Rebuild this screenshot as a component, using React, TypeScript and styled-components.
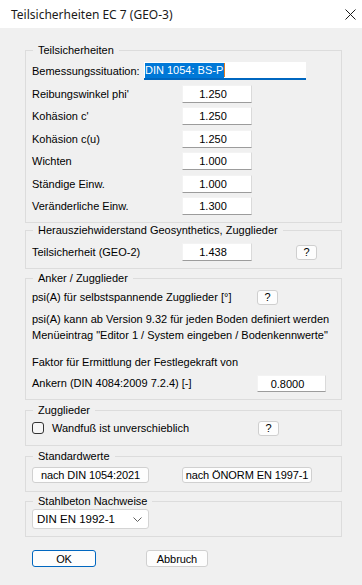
import React from 'react';
import styled, { createGlobalStyle } from 'styled-components';

const GlobalStyle = createGlobalStyle`
  html, body {
    margin: 0;
    padding: 0;
    background: #f0f0f0;
  }
  body {
    font-family: "Liberation Sans", Arial, sans-serif;
    font-size: 11px;
    color: #000;
  }
`;

// WINDOW FRAME
const Window = styled.div`
  width: 362px;
  height: 585px;
  background: #f0f0f0;
  overflow: hidden;
  display: flex;
  flex-direction: column;
`;

const TitleBar = styled.div`
  height: 28px;
  flex: none;
  background: #ffffff;
  display: flex;
  align-items: center;
  justify-content: space-between;
  padding: 0 6px 0 11px;
  box-sizing: border-box;
  font-family: "Noto Sans", "Open Sans", sans-serif;
  font-size: 12px;
  color: #1a1a1a;
`;

const Body = styled.div`
  display: flex;
  flex-direction: column;
  padding: 15px 20px 0 25px;
`;

// GROUP BOXES
const Group = styled.fieldset<{ $gap?: number; $pt: number; $pb: number }>`
  margin: ${({ $gap }) => $gap ?? 0}px 0 0 0;
  padding: ${({ $pt }) => $pt}px 0 ${({ $pb }) => $pb}px 6px;
  border: 1px solid #dcdcdc;
  min-width: 0;
  width: 317px;
  box-sizing: border-box;
`;

const Legend = styled.legend`
  margin-left: 1px;
  padding: 0 5px;
  height: 14px;
  line-height: 14px;
  font-size: 11px;
`;

const Stack = styled.div<{ $gap?: number }>`
  display: flex;
  flex-direction: column;
  gap: ${({ $gap }) => $gap ?? 0}px;
`;

const Row = styled.div<{ $h?: number; $mt?: number }>`
  display: flex;
  align-items: center;
  height: ${({ $h }) => $h ?? 18}px;
  margin-top: ${({ $mt }) => $mt ?? 0}px;
  white-space: nowrap;
`;

const Label = styled.span<{ $w?: number }>`
  width: ${({ $w }) => ($w ? `${$w}px` : 'auto')};
  flex: none;
`;

const TextLine = styled.div<{ $mt?: number }>`
  height: 16px;
  line-height: 16px;
  margin-top: ${({ $mt }) => $mt ?? 0}px;
  white-space: nowrap;
`;

// CONTROLS
const Field = styled.div<{ $w?: number; $h?: number }>`
  width: ${({ $w }) => $w ?? 70}px;
  height: ${({ $h }) => $h ?? 18}px;
  line-height: ${({ $h }) => ($h ?? 18) - 1}px;
  box-sizing: border-box;
  background: #ffffff;
  border: 1px solid #f3f3f3;
  border-right-color: #dadada;
  border-bottom-color: #9c9c9c;
  text-align: center;
  padding-right: 8px;
  flex: none;
`;

const FocusField = styled.div`
  width: 162px;
  height: 18px;
  box-sizing: border-box;
  background: #ffffff;
  border-bottom: 2px solid #0067c0;
  display: flex;
  align-items: center;
  padding-left: 1px;
  flex: none;
`;

const Selected = styled.span`
  background: #0078d7;
  color: #ffffff;
  line-height: 15px;
  padding-right: 1px;
`;

const Caret = styled.span`
  width: 1px;
  height: 14px;
  background: #e07a1f;
`;

const HelpButton = styled.div<{ $ml?: number }>`
  width: 21px;
  height: 15px;
  margin-left: ${({ $ml }) => $ml ?? 0}px;
  box-sizing: border-box;
  border: 1px solid #cfcfcf;
  border-radius: 3px;
  background: #fdfdfd;
  display: flex;
  align-items: center;
  justify-content: center;
  flex: none;
`;

const PushButton = styled.div<{ $w: number; $h?: number; $ml?: number; $default?: boolean }>`
  width: ${({ $w }) => $w}px;
  height: ${({ $h }) => $h ?? 16}px;
  margin-left: ${({ $ml }) => $ml ?? 0}px;
  box-sizing: border-box;
  border: 1px solid ${({ $default }) => ($default ? '#0067c0' : '#d0d0d0')};
  border-radius: 3px;
  background: #fdfdfd;
  display: flex;
  align-items: center;
  justify-content: center;
  flex: none;
  font-size: 11px;
  letter-spacing: -0.1px;
  white-space: nowrap;
`;

const CheckBox = styled.div`
  width: 12px;
  height: 12px;
  box-sizing: border-box;
  border: 1px solid #333333;
  border-radius: 3px;
  background: #f6f6f6;
  margin: 0 8px 0 0;
  flex: none;
`;

const Combo = styled.div`
  width: 117px;
  height: 20px;
  box-sizing: border-box;
  background: #ffffff;
  border: 1px solid #d4d4d4;
  border-radius: 3px;
  display: flex;
  align-items: center;
  justify-content: space-between;
  padding: 0 6px 0 4px;
  font-size: 11.5px;
`;

const ButtonBar = styled.div`
  display: flex;
  margin-top: 13px;
  padding-left: 7px;
`;

const CloseIcon = () => (
  <svg width="11" height="11" viewBox="0 0 11 11">
    <path d="M0.5 0.5 L10.5 10.5 M10.5 0.5 L0.5 10.5" stroke="#1a1a1a" strokeWidth="1" fill="none" />
  </svg>
);

const Chevron = () => (
  <svg width="9" height="5" viewBox="0 0 9 5">
    <path d="M0.5 0.5 L4.5 4.5 L8.5 0.5" stroke="#606060" strokeWidth="1" fill="none" />
  </svg>
);

const partialFactors = [
  { label: "Reibungswinkel phi'", value: '1.250' },
  { label: "Kohäsion c'", value: '1.250' },
  { label: 'Kohäsion c(u)', value: '1.250' },
  { label: 'Wichten', value: '1.000' },
  { label: 'Ständige Einw.', value: '1.000' },
  { label: 'Veränderliche Einw.', value: '1.300' },
];

const App = () => (
  <>
    <GlobalStyle />
    <Window>
      <TitleBar>
        <span>Teilsicherheiten EC 7 (GEO-3)</span>
        <CloseIcon />
      </TitleBar>
      <Body>
        <Group $pt={5} $pb={7}>
          <Legend>Teilsicherheiten</Legend>
          <Stack $gap={4.5}>
            <Row>
              <Label $w={112}>Bemessungssituation:</Label>
              <FocusField>
                <Selected>DIN 1054: BS-P</Selected>
                <Caret />
              </FocusField>
            </Row>
            {partialFactors.map((f) => (
              <Row key={f.label}>
                <Label $w={150}>{f.label}</Label>
                <Field>{f.value}</Field>
              </Row>
            ))}
          </Stack>
        </Group>

        <Group $pt={6} $pb={7}>
          <Legend>Herausziehwiderstand Geosynthetics, Zugglieder</Legend>
          <Row>
            <Label $w={150}>Teilsicherheit (GEO-2)</Label>
            <Field>1.438</Field>
            <HelpButton $ml={44}>?</HelpButton>
          </Row>
        </Group>

        <Group $gap={2} $pt={3} $pb={7}>
          <Legend>Anker / Zugglieder</Legend>
          <Row>
            <Label $w={225}>psi(A) für selbstspannende Zugglieder [°]</Label>
            <HelpButton>?</HelpButton>
          </Row>
          <TextLine $mt={5}>psi(A) kann ab Version 9.32 für jeden Boden definiert werden</TextLine>
          <TextLine>Menüeintrag "Editor 1 / System eingeben / Bodenkennwerte"</TextLine>
          <TextLine $mt={11}>Faktor für Ermittlung der Festlegekraft von</TextLine>
          <Row $mt={4}>
            <Label $w={225}>Ankern (DIN 4084:2009 7.2.4) [-]</Label>
            <Field $w={69} $h={17}>0.8000</Field>
          </Row>
        </Group>

        <Group $gap={3} $pt={2} $pb={8}>
          <Legend>Zugglieder</Legend>
          <Row>
            <CheckBox />
            <Label $w={206}>Wandfuß ist unverschieblich</Label>
            <HelpButton>?</HelpButton>
          </Row>
        </Group>

        <Group $gap={3} $pt={4} $pb={8}>
          <Legend>Standardwerte</Legend>
          <Row $h={16}>
            <PushButton $w={117}>nach DIN 1054:2021</PushButton>
            <PushButton $w={130} $ml={33}>nach ÖNORM EN 1997-1</PushButton>
          </Row>
        </Group>

        <Group $gap={2} $pt={1} $pb={7}>
          <Legend>Stahlbeton Nachweise</Legend>
          <Combo>
            <span>DIN EN 1992-1</span>
            <Chevron />
          </Combo>
        </Group>

        <ButtonBar>
          <PushButton $w={64} $h={17} $default>OK</PushButton>
          <PushButton $w={62} $h={17} $ml={50}>Abbruch</PushButton>
        </ButtonBar>
      </Body>
    </Window>
  </>
);

export default App;
